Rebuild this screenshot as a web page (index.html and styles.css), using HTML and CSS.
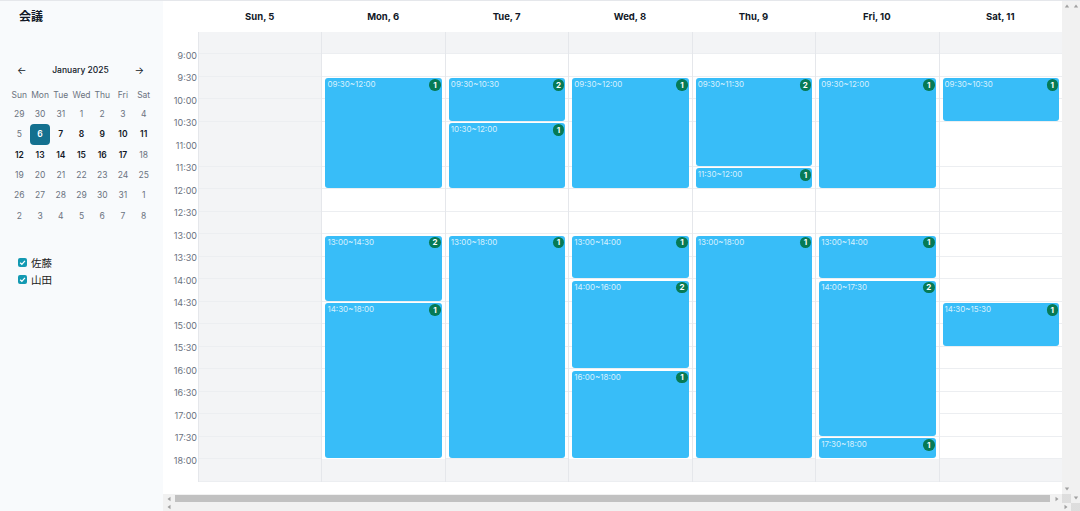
FILE: index.html
```html
<!DOCTYPE html>
<html lang="ja">

<head>
    <meta charset="UTF-8">
    <meta name="viewport" content="width=device-width, initial-scale=1.0">
    <title>会議</title>
    <link rel="stylesheet" href="styles.css">
</head>

<body>
    <aside class="sidebar">
        <h1 class="title">会議</h1>

        <!-- Mini calendar -->
        <div class="mini">
            <div class="mini-nav">
                <span class="arrow">&larr;</span>
                <span class="month">January 2025</span>
                <span class="arrow">&rarr;</span>
            </div>
            <div class="mini-grid">
                <span class="wd">Sun</span><span class="wd">Mon</span><span class="wd">Tue</span><span class="wd">Wed</span><span class="wd">Thu</span><span class="wd">Fri</span><span class="wd">Sat</span>
                <span>29</span><span>30</span><span>31</span><span>1</span><span>2</span><span>3</span><span>4</span>
                <span>5</span><span class="sel">6</span><span class="b">7</span><span class="b">8</span><span class="b">9</span><span class="b">10</span><span class="b">11</span>
                <span class="b">12</span><span class="b">13</span><span class="b">14</span><span class="b">15</span><span class="b">16</span><span class="b">17</span><span>18</span>
                <span>19</span><span>20</span><span>21</span><span>22</span><span>23</span><span>24</span><span>25</span>
                <span>26</span><span>27</span><span>28</span><span>29</span><span>30</span><span>31</span><span>1</span>
                <span>2</span><span>3</span><span>4</span><span>5</span><span>6</span><span>7</span><span>8</span>
            </div>
        </div>

        <!-- Members -->
        <ul class="members">
            <li><span class="check"><svg viewBox="0 0 10 10"><path d="M2.4 5.2 4.3 7 7.7 3.2" /></svg></span>佐藤</li>
            <li><span class="check"><svg viewBox="0 0 10 10"><path d="M2.4 5.2 4.3 7 7.7 3.2" /></svg></span>山田</li>
        </ul>
    </aside>

    <main class="main">
        <div class="pane">
            <div class="scroller">
                <div class="week">
                    <div class="corner"></div>
                    <div class="dayhead">Sun, 5</div>
                    <div class="dayhead">Mon, 6</div>
                    <div class="dayhead">Tue, 7</div>
                    <div class="dayhead">Wed, 8</div>
                    <div class="dayhead">Thu, 9</div>
                    <div class="dayhead">Fri, 10</div>
                    <div class="dayhead">Sat, 11</div>

                    <div class="gutter">
                        <span></span>
                        <span>9:00</span><span>9:30</span><span>10:00</span><span>10:30</span><span>11:00</span><span>11:30</span>
                        <span>12:00</span><span>12:30</span><span>13:00</span><span>13:30</span><span>14:00</span><span>14:30</span>
                        <span>15:00</span><span>15:30</span><span>16:00</span><span>16:30</span><span>17:00</span><span>17:30</span>
                        <span>18:00</span>
                    </div>

                    <!-- Sun -->
                    <div class="day off"></div>

                    <!-- Mon -->
                    <div class="day">
                        <div class="ev" style="grid-row: 3 / 8"><span class="ev-time">09:30~12:00</span><span class="badge">1</span></div>
                        <div class="ev" style="grid-row: 10 / 13"><span class="ev-time">13:00~14:30</span><span class="badge">2</span></div>
                        <div class="ev" style="grid-row: 13 / 20"><span class="ev-time">14:30~18:00</span><span class="badge">1</span></div>
                    </div>

                    <!-- Tue -->
                    <div class="day">
                        <div class="ev" style="grid-row: 3 / 5"><span class="ev-time">09:30~10:30</span><span class="badge">2</span></div>
                        <div class="ev" style="grid-row: 5 / 8"><span class="ev-time">10:30~12:00</span><span class="badge">1</span></div>
                        <div class="ev" style="grid-row: 10 / 20"><span class="ev-time">13:00~18:00</span><span class="badge">1</span></div>
                    </div>

                    <!-- Wed -->
                    <div class="day">
                        <div class="ev" style="grid-row: 3 / 8"><span class="ev-time">09:30~12:00</span><span class="badge">1</span></div>
                        <div class="ev" style="grid-row: 10 / 12"><span class="ev-time">13:00~14:00</span><span class="badge">1</span></div>
                        <div class="ev" style="grid-row: 12 / 16"><span class="ev-time">14:00~16:00</span><span class="badge">2</span></div>
                        <div class="ev" style="grid-row: 16 / 20"><span class="ev-time">16:00~18:00</span><span class="badge">1</span></div>
                    </div>

                    <!-- Thu -->
                    <div class="day">
                        <div class="ev" style="grid-row: 3 / 7"><span class="ev-time">09:30~11:30</span><span class="badge">2</span></div>
                        <div class="ev" style="grid-row: 7 / 8"><span class="ev-time">11:30~12:00</span><span class="badge">1</span></div>
                        <div class="ev" style="grid-row: 10 / 20"><span class="ev-time">13:00~18:00</span><span class="badge">1</span></div>
                    </div>

                    <!-- Fri -->
                    <div class="day">
                        <div class="ev" style="grid-row: 3 / 8"><span class="ev-time">09:30~12:00</span><span class="badge">1</span></div>
                        <div class="ev" style="grid-row: 10 / 12"><span class="ev-time">13:00~14:00</span><span class="badge">1</span></div>
                        <div class="ev" style="grid-row: 12 / 19"><span class="ev-time">14:00~17:30</span><span class="badge">2</span></div>
                        <div class="ev" style="grid-row: 19 / 20"><span class="ev-time">17:30~18:00</span><span class="badge">1</span></div>
                    </div>

                    <!-- Sat -->
                    <div class="day">
                        <div class="ev" style="grid-row: 3 / 5"><span class="ev-time">09:30~10:30</span><span class="badge">1</span></div>
                        <div class="ev" style="grid-row: 13 / 15"><span class="ev-time">14:30~15:30</span><span class="badge">1</span></div>
                    </div>
                </div>
            </div>

            <!-- inner scrollbars -->
            <div class="vbar">
                <svg class="tri" viewBox="0 0 6 6"><path d="M3 1.5 5.2 4.5H.8z" /></svg>
                <svg class="tri" viewBox="0 0 6 6"><path d="M3 4.5 5.2 1.5H.8z" /></svg>
            </div>
            <div class="hbar">
                <svg class="tri" viewBox="0 0 6 6"><path d="M1.5 3 4.5 .8v4.4z" /></svg>
                <span class="thumb"></span>
                <svg class="tri" viewBox="0 0 6 6"><path d="M4.5 3 1.5 .8v4.4z" /></svg>
            </div>
            <div class="sb-corner"></div>
        </div>

        <!-- outer scrollbars -->
        <div class="vbar">
            <svg class="tri" viewBox="0 0 6 6"><path d="M3 1.5 5.2 4.5H.8z" /></svg>
            <svg class="tri" viewBox="0 0 6 6"><path d="M3 4.5 5.2 1.5H.8z" /></svg>
        </div>
        <div class="hbar">
            <svg class="tri" viewBox="0 0 6 6"><path d="M1.5 3 4.5 .8v4.4z" /></svg>
            <svg class="tri" viewBox="0 0 6 6"><path d="M4.5 3 1.5 .8v4.4z" /></svg>
        </div>
        <div class="sb-corner"></div>
    </main>
</body>

</html>
```

FILE: styles.css
```css
:root {
    --side-bg: #f8fafc;
    --off: #f3f4f6;
    --line: #eceef1;
    --border: #e5e7eb;
    --event: #38bdf8;
    --badge: #067a55;
    --teal: #14708f;
    --check: #1399b2;
    --muted: #6b7280;
    --text: #111827;
    --track: #f1f1f1;
    --thumb: #c1c1c1;
    --slot: 22.5px;
}

* {
    margin: 0;
    padding: 0;
    box-sizing: border-box;
}

html,
body {
    height: 100%;
}

body {
    display: flex;
    overflow: hidden;
    border-top: 1px solid var(--border);
    font-family: Inter, 'Noto Sans CJK JP', sans-serif;
    color: var(--text);
    background: #fff;
}

/* Sidebar */
.sidebar {
    width: 163px;
    flex-shrink: 0;
    background: var(--side-bg);
    padding: 7px 9px 0;
}

.title {
    font-size: 12px;
    line-height: 18px;
    font-weight: 700;
    padding-left: 10px;
}

.mini {
    margin-top: 34px;
}

.mini-nav {
    display: flex;
    justify-content: space-between;
    align-items: center;
    height: 20px;
    padding: 0 10px 0 8px;
    font-size: 8.5px;
}

.arrow {
    font-size: 10px;
}

.month {
    font-weight: 500;
}

.mini-grid {
    margin-top: 6px;
    display: grid;
    grid-template-columns: repeat(7, 1fr);
    grid-template-rows: 18px;
    grid-auto-rows: 20.3px;
    font-size: 8.5px;
    color: var(--muted);
}

.mini-grid span {
    display: flex;
    align-items: center;
    justify-content: center;
}

.mini-grid .b {
    color: var(--text);
    font-weight: 600;
}

.mini-grid .sel {
    background: var(--teal);
    color: #fff;
    font-weight: 600;
    border-radius: 4px;
}

.members {
    list-style: none;
    margin-top: 28px;
    padding-left: 9px;
    font-size: 10.5px;
    color: #222;
}

.members li {
    display: flex;
    align-items: center;
    gap: 4px;
    height: 17px;
}

.check {
    width: 9px;
    height: 9px;
    border-radius: 2px;
    background: var(--check);
    display: flex;
}

.check svg {
    width: 9px;
    height: 9px;
    fill: none;
    stroke: #fff;
    stroke-width: 1.4;
}

/* Main area + scrollbars */
.main {
    flex: 1;
    min-width: 0;
    display: grid;
    grid-template-columns: 1fr 9px;
    grid-template-rows: 1fr 8px;
}

.pane {
    min-height: 0;
    display: grid;
    grid-template-columns: 1fr 9px;
    grid-template-rows: 1fr 9px;
}

.scroller {
    min-height: 0;
    overflow: hidden;
}

.vbar {
    background: var(--track);
    display: flex;
    flex-direction: column;
    justify-content: space-between;
    align-items: center;
    padding: 2px 0;
}

.hbar {
    background: var(--track);
    display: flex;
    align-items: center;
    justify-content: space-between;
    padding: 0 2px 0 3px;
}

.tri {
    width: 6px;
    height: 6px;
    fill: #a0a0a0;
    flex-shrink: 0;
}

.thumb {
    flex: 1;
    height: 7px;
    margin: 0 4px 0 3px;
    background: var(--thumb);
}

.sb-corner {
    background-color: #e8e8e8;
    background-image: radial-gradient(#d0d0d0 0.6px, transparent 0.8px);
    background-size: 2px 2px;
}

/* Week grid */
.week {
    display: grid;
    grid-template-columns: 35px repeat(7, 1fr);
    grid-template-rows: 31px auto;
}

.dayhead {
    display: flex;
    align-items: center;
    justify-content: center;
    font-size: 9.5px;
    font-weight: 700;
}

.gutter {
    display: grid;
    grid-template-rows: repeat(20, var(--slot));
    font-size: 9px;
    color: var(--muted);
    text-align: right;
    padding-right: 1px;
}

.gutter span {
    line-height: 11px;
    transform: translateY(-5.5px);
}

.day {
    display: grid;
    grid-template-rows: repeat(20, var(--slot));
    border-left: 1px solid var(--border);
    background:
        repeating-linear-gradient(to bottom, transparent 0 21.5px, var(--line) 21.5px var(--slot)),
        linear-gradient(to bottom, var(--off) 0 var(--slot), #fff var(--slot) 427.5px, var(--off) 427.5px);
}

.day:nth-child(9) {
    border-left: none;
}

.day.off {
    background:
        repeating-linear-gradient(to bottom, transparent 0 21.5px, var(--line) 21.5px var(--slot)),
        var(--off);
}

.ev {
    grid-column: 1;
    margin: 1px 3px 1.5px;
    background: var(--event);
    border-radius: 3px;
    display: flex;
    justify-content: space-between;
    align-items: flex-start;
    padding: 1px 1px 0 2px;
    min-height: 0;
    overflow: hidden;
}

.ev-time {
    font-size: 8px;
    line-height: 11px;
    color: rgba(255, 255, 255, .8);
}

.badge {
    width: 11.5px;
    height: 11.5px;
    border-radius: 50%;
    background: var(--badge);
    color: #fff;
    font-size: 8px;
    font-weight: 700;
    display: flex;
    align-items: center;
    justify-content: center;
    flex-shrink: 0;
}
```
